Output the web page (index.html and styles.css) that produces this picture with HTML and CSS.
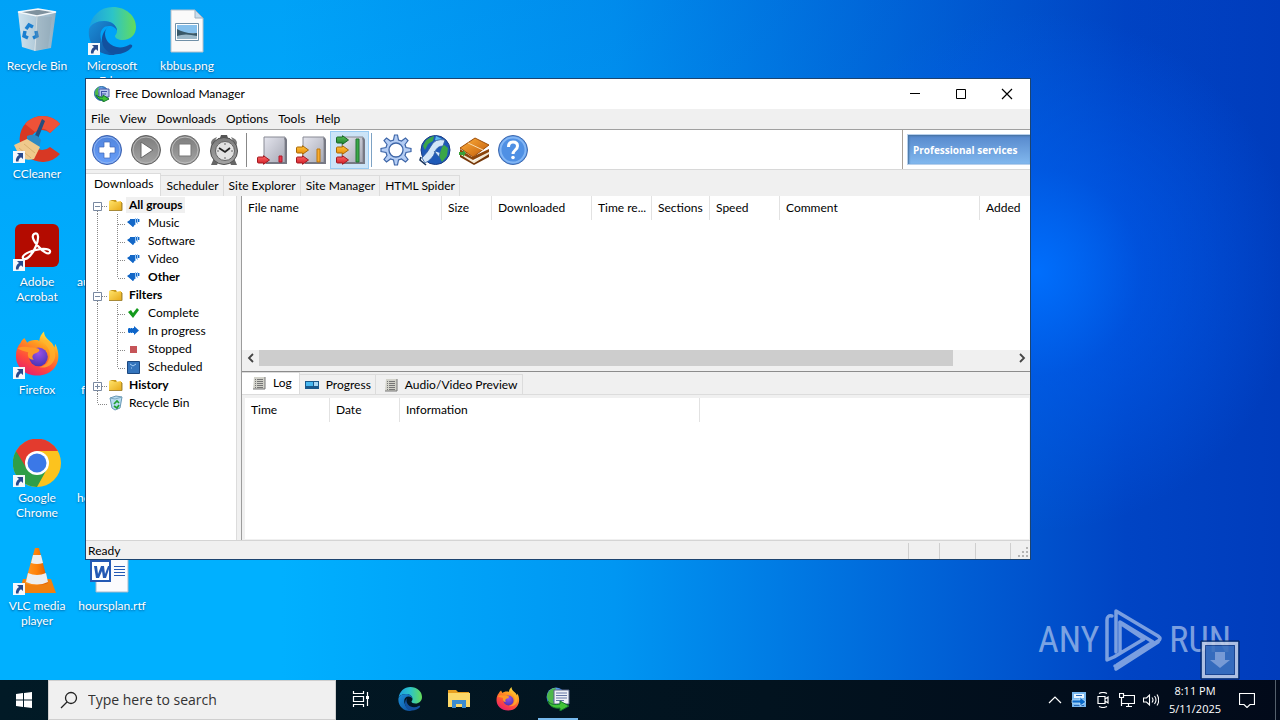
FILE: index.html
```html
<!DOCTYPE html>
<html lang="en">
<head>
<meta charset="utf-8">
<title>Free Download Manager</title>
<link rel="stylesheet" href="styles.css">
</head>
<body>
<svg class="sprite" width="0" height="0" aria-hidden="true">
  <defs>
    <linearGradient id="gBlue" x1="0" y1="0" x2="0" y2="1"><stop offset="0" stop-color="#4f83dc"/><stop offset="1" stop-color="#6aa0fa"/></linearGradient>
    <linearGradient id="gGray" x1="0" y1="0" x2="0" y2="1"><stop offset="0" stop-color="#7c7c7c"/><stop offset="1" stop-color="#a4a4a4"/></linearGradient>
    <linearGradient id="gBox" x1="0" y1="0" x2="1" y2="1"><stop offset="0" stop-color="#e4e5ee"/><stop offset="1" stop-color="#a6a8b4"/></linearGradient>
    <linearGradient id="gRed" x1="0" y1="0" x2="0" y2="1"><stop offset="0" stop-color="#ff6a6a"/><stop offset="1" stop-color="#d01c24"/></linearGradient>
    <linearGradient id="gOrange" x1="0" y1="0" x2="0" y2="1"><stop offset="0" stop-color="#ffc53a"/><stop offset="1" stop-color="#e88a08"/></linearGradient>
    <linearGradient id="gGreen" x1="0" y1="0" x2="0" y2="1"><stop offset="0" stop-color="#58c058"/><stop offset="1" stop-color="#1d8030"/></linearGradient>
    <linearGradient id="gFolder" x1="0" y1="0" x2="1" y2="1"><stop offset="0" stop-color="#ffe36a"/><stop offset="1" stop-color="#e8ac1c"/></linearGradient>
    <linearGradient id="gEdgeTop" x1="0" y1="0" x2="1" y2="0"><stop offset="0" stop-color="#1c9fe0"/><stop offset=".5" stop-color="#2cc4c8"/><stop offset="1" stop-color="#64dc5a"/></linearGradient>
    <linearGradient id="gEdgeLow" x1="0" y1="0" x2="1" y2="1"><stop offset="0" stop-color="#1b8fd8"/><stop offset="1" stop-color="#0f4f9e"/></linearGradient>
    <linearGradient id="gFox" x1=".8" y1="0" x2=".3" y2="1"><stop offset="0" stop-color="#fff04a"/><stop offset=".35" stop-color="#ff9a1f"/><stop offset=".7" stop-color="#ff4a3c"/><stop offset="1" stop-color="#e8206c"/></linearGradient>
    <radialGradient id="gFoxIn" cx=".5" cy=".3" r=".7"><stop offset="0" stop-color="#9b50e8"/><stop offset="1" stop-color="#4b35b4"/></radialGradient>
    <linearGradient id="gCone" x1="0" y1="0" x2="1" y2="0"><stop offset="0" stop-color="#ff9a28"/><stop offset=".5" stop-color="#ff8208"/><stop offset="1" stop-color="#d85c00"/></linearGradient>
    <linearGradient id="gBin" x1="0" y1="0" x2="1" y2="0"><stop offset="0" stop-color="#dfe8ee"/><stop offset="1" stop-color="#9fb0bc"/></linearGradient>
    <radialGradient id="gGlobe" cx=".4" cy=".3" r=".8"><stop offset="0" stop-color="#a0d0ff"/><stop offset=".6" stop-color="#2c78dc"/><stop offset="1" stop-color="#143c94"/></radialGradient>
    <linearGradient id="gBook" x1="0" y1="0" x2="1" y2="1"><stop offset="0" stop-color="#ffb03c"/><stop offset="1" stop-color="#c05a08"/></linearGradient>
  </defs>
  <symbol id="link" viewBox="0 0 12 12"><path d="M0 0h12v12H0z" fill="#f4f8fc"/><path d="M4 2h6v6L8 6.200C6.500 7 5.500 8.500 5.500 10.500H3C2.500 8 3.500 5.500 6 4z" fill="#284a8c"/></symbol>
  <symbol id="edge" viewBox="0 0 48 48">
    <path d="M1 22C3 9 12 0 25 0c13 0 23 9 23 20 0 8-6 13-13 13-5 0-8-2-8-4 0-1 2-2 2-5 0-6-6-10-13-10C8 14 2 18 1 22z" fill="url(#gEdgeTop)"/>
    <path d="M1 22c2-5 8-8 15-8 7 0 13 4 13 10-1-3-4-5-8-5-6 0-10 5-8 13 2 8 8 14 15 15-2 1-3 1-4 1C10 48-1 37 1 22z" fill="url(#gEdgeLow)"/>
    <path d="M20 20c-4 3-4 10 0 15 5 6 14 7 21 3 2-1 4 0 3 2-4 5-12 8-18 7C14 45 9 30 20 20z" fill="#12519f"/>
  </symbol>
  <symbol id="fox" viewBox="0 0 48 48">
    <path d="M6 12c1-3 3-4 4-5l3 5c2-2 5-3 8-3 2 0 4 0 5 1 0-4 2-7 5-10 0 6 4 8 8 12 1 1 2 3 3 5l1-4c5 10 4 20-1 26-5 6-11 8-18 8C11 47 1 38 1 26c0-6 2-11 5-14z" fill="url(#gFox)"/>
    <circle cx="25" cy="27" r="10" fill="url(#gFoxIn)"/>
    <path d="M3 18c5-3 11-1 14-1 5 0 9 1 9 3s-4 3-6 4c-2 2-2 4 0 6-5 0-7-3-6-8-4-1-8-2-11-4z" fill="#ff9826"/>
    <path d="M25 9c8 3 13 10 12 18-1 6-5 10-11 11 8 2 16-3 17-12 0-8-5-14-9-17z" fill="#ffb52c" opacity=".7"/>
  </symbol>
  <symbol id="bin" viewBox="0 0 48 48">
    <path d="M5 5l20-3 18 3-5 36-16 3-13-4z" fill="url(#gBin)" opacity=".92"/>
    <path d="M5 5l20-3 18 3-19 4z" fill="#7f929e"/><path d="M5 5l20-3 18 3-19 4z" fill="none" stroke="#f3f8fb" stroke-width="1.500"/>
    <path d="M24 9l-2 35" stroke="#edf5f8" stroke-width="1"/>
    <g fill="none" stroke="#1a7fd0" stroke-width="3.500"><path d="M13 22l3-4 4 2"/><path d="M23 24l1 5-4 2"/><path d="M15 31l-4-2 1-5"/></g>
    <path d="M23 9l16 1-4 31-13 3z" fill="#8c9aa4" opacity=".3"/>
  </symbol>
  <symbol id="folder" viewBox="0 0 16 16"><path d="M1 4l3-1h4l1 2h5v9H1z" fill="#c89818"/><path d="M1 4h4l2 1 6-1v9H1z" fill="url(#gFolder)"/><path d="M1 13.500h13V6" fill="none" stroke="#a88a38"/></symbol>
  <symbol id="drop" viewBox="0 0 16 16"><path d="M1 7l3-2V4h5v4l-2 4z" fill="#0b62c4"/><path d="M1 7l2 0 4 5 4-5 2 0V4H4v3z" fill="#1468c8"/><path d="M9.500 3v7M11.500 3v6M13.500 4v3" stroke="#9cc8f4"/></symbol>
  <symbol id="list" viewBox="0 0 14 14"><path d="M2 1h11v12H1z" fill="#d2d2ca"/><path d="M13 1v12H1" fill="none" stroke="#777"/><path d="M3 3.500h1m1 0h6M3 5.500h1m1 0h6M3 7.500h1m1 0h6M3 9.500h1m1 0h6M3 11.500h1m1 0h6" stroke="#767676"/></symbol>
  <symbol id="fdm" viewBox="0 0 24 24">
    <circle cx="10" cy="10" r="9.500" fill="url(#gGlobe)"/><path d="M1 9c1-5 4-8 9-8L8 6l2 3-3 4 3 5c-5 0-9-4-9-9z" fill="#4eb848"/>
    <path d="M8 3h15v14H8z" fill="#eef0f6" stroke="#5a6488"/><path d="M10 6h11M10 8.500h11M10 11h11M10 13.500h8" stroke="#6474a4"/>
    <path d="M2 14c3 4 7 4 12 3v-3l9 5-9 5v-3C8 22 3 19 2 14z" fill="#42c438" stroke="#14782c"/>
  </symbol>
  <symbol id="fdm-small" viewBox="0 0 16 16">
    <circle cx="7.500" cy="7.500" r="7" fill="url(#gGlobe)" stroke="#2a6a9c"/><path d="M1 7q0-4 4-6l-1 4 1 3-2 3q-2-1-2-4z" fill="#4eb848"/>
    <path d="M5 3h10v8H5z" fill="#b8c8f0" stroke="#4858a0"/><path d="M7 5.500h6M7 8h5M7.500 5v5" stroke="#4054a8"/>
    <path d="M2 9q3 3 7 2V9l6 4-6 3v-2Q4 14 2 9z" fill="#42c438" stroke="#14782c"/>
  </symbol>
  <symbol id="arrowR" viewBox="0 0 14 10"><path d="M1 3q0-1 1-1h5V.700L13 5 7 9.300V8H2Q1 8 1 7z"/></symbol>
</svg>

<div class="desktop">
  <div class="shortcuts">
    <div class="shortcut"><svg class="pic" viewBox="0 0 48 48"><use href="#bin"/></svg><span>Recycle Bin</span></div>
    <div class="shortcut"><svg class="pic" viewBox="0 0 48 48"><path d="M47 9A23 23 0 1 0 47 39L37 32a11 10 0 1 1 0-14z" fill="#d83824"/><path d="M47 9A23 23 0 0 0 12 9l10 8q8-7 15 1z" fill="#ee5238"/><path d="M29 4l3 2-8 20-4-1z" fill="#254d7c"/><path d="M14 21q9-4 14 4l-2 8-12-6z" fill="#2d8ac4"/><path d="M1 30l13-6 13 8-6 12q-12 3-16-6z" fill="#efc98c"/><path d="M6 33l12 10M11 29l11 9" stroke="#d8b070"/><use href="#link" y="36" width="12" height="12"/></svg><span>CCleaner</span></div>
    <div class="shortcut"><svg class="pic" viewBox="0 0 48 48"><rect x="2" y="1" width="44" height="43" rx="6" fill="#b30b00"/><path d="M21 11c5-3 5 5 2 12-3 8-9 14-12 13-4-2 2-7 12-9 8-2 15-1 14 2-1 4-8-1-12-6-4-4-7-10-4-12z" fill="none" stroke="#fff" stroke-width="2.200"/><use href="#link" y="36" width="12" height="12"/></svg><span>Adobe Acrobat</span></div>
    <div class="shortcut"><svg class="pic" viewBox="0 0 48 48"><use href="#fox" x="2" y="0" width="45" height="46"/><use href="#link" y="36" width="12" height="12"/></svg><span>Firefox</span></div>
    <div class="shortcut"><svg class="pic" viewBox="0 0 48 48"><circle cx="24" cy="24" r="24" fill="#fcc31e"/><path d="M24 24L3 12A24 24 0 0 0 24 48L34 30z" fill="#2f9e48"/><path d="M3 12A24 24 0 0 1 45 12H24L14 30z" fill="#e33b2e"/><circle cx="24" cy="24" r="12" fill="#fff"/><circle cx="24" cy="24" r="9.500" fill="#3b78e7"/><use href="#link" y="36" width="12" height="12"/></svg><span>Google Chrome</span></div>
    <div class="shortcut"><svg class="pic" viewBox="0 0 48 48"><path d="M10 32h28l5 14H6z" fill="#f08010"/><path d="M22 1h4l9 35q-11 5-23 0z" fill="url(#gCone)"/><path d="M20 8h8l2 8q-6 2-12 0zM15 26q9 4 18 0l2 9q-11 5-22 0z" fill="#eceef0"/><use href="#link" y="36" width="12" height="12"/></svg><span>VLC media player</span></div>
    <div class="shortcut"><svg class="pic" viewBox="0 0 48 48"><use href="#edge"/><use href="#link" y="36" width="12" height="12"/></svg><span>Microsoft Edge</span></div>
    <div class="shortcut"></div>
    <div class="shortcut partial"><span>au</span></div>
    <div class="shortcut partial"><span class="inset">fo</span></div>
    <div class="shortcut partial"><span>ho</span></div>
    <div class="shortcut"><svg class="pic" viewBox="0 0 48 48"><path d="M8 3h32v42H8z" fill="#fbfbfd" stroke="#a8b8c8"/><path d="M3 14h19v20H3z" fill="#fff" stroke="#2459b4" stroke-width="2"/><path d="M6 19h3l1 8 3-8h3l1 8 3-8h2l-4 12h-3l-1-7-3 7H8z" fill="#2459b4"/><path d="M26 19.500h11M26 22.500h11M26 25.500h11M26 28.500h11" stroke="#2459b4"/></svg><span>hoursplan.rtf</span></div>
    <div class="shortcut"><svg class="pic" viewBox="0 0 48 48"><path d="M8 3h24l8 8v34H8z" fill="#fafafa" stroke="#b8c0c8"/><path d="M32 3v8h8z" fill="#c8dcec" stroke="#9cb0c0"/><path d="M12.500 16.500h23v17h-23z" fill="#fff" stroke="#7090a8"/><path d="M14 18h20v8H14z" fill="#86c0ec"/><path d="M14 22q8 5 20 4v6H14z" fill="#385868"/><path d="M14 29q8-3 20 0v3H14z" fill="#9cb8c8"/></svg><span>kbbus.png</span></div>
  </div>

  <div class="watermark" aria-hidden="true">
    <span>ANY</span>
    <svg viewBox="0 0 58 64" width="58" height="64"><g fill="none" stroke="currentColor" stroke-width="3.500" stroke-linejoin="round" stroke-linecap="round"><path d="M11 44V3l42 25q4 3 0 5L14 58q-2 2-4 0"/><path d="M15 14l33 20-36 23"/><path d="M7 8q-5-1-5 4v40l7-3 30-18L15 15v30"/><path d="M11 61l42-27"/></g></svg>
    <span>RUN</span>
  </div>
  <svg class="drop-badge" viewBox="0 0 40 40" aria-hidden="true"><path d="M1 1h38v38H1z" fill="#3b70bd" stroke="#0b1c44"/><path d="M3.500 3.500h33v33h-33z" fill="none" stroke="#c0cde6" stroke-width="3"/><path d="M5.500 5.500h29v29h-29z" fill="none" stroke="#1f468c"/><path d="M15 12h10v8h5L20 28l-10-8h5z" fill="#84a4d8"/></svg>

  <main class="window">
    <header class="titlebar">
      <svg class="i16"><use href="#fdm-small"/></svg>
      <h1>Free Download Manager</h1>
      <button class="cap" aria-label="Minimize"><svg viewBox="0 0 12 12"><path d="M1 5.500h10" stroke="#000"/></svg></button>
      <button class="cap" aria-label="Maximize"><svg viewBox="0 0 12 12"><path d="M1.500 1.500h9v9h-9z" fill="none" stroke="#000"/></svg></button>
      <button class="cap" aria-label="Close"><svg viewBox="0 0 12 12"><path d="M1 1l10 10M11 1L1 11" stroke="#000" stroke-width="1.200"/></svg></button>
    </header>
    <nav class="menubar"><button>File</button><button>View</button><button>Downloads</button><button>Options</button><button>Tools</button><button>Help</button></nav>
    <div class="toolbar">
      <button class="tool" aria-label="Add download"><svg viewBox="0 0 32 32"><circle cx="16" cy="16" r="14.500" fill="url(#gBlue)" stroke="#3f62ac"/><circle cx="16" cy="16" r="13" fill="none" stroke="#8fb4f0"/><path d="M13 8h6v5h5v6h-5v5h-6v-5H8v-6h5z" fill="#fff" stroke="#3f68b8" stroke-width=".700"/></svg></button>
      <button class="tool" aria-label="Start"><svg viewBox="0 0 32 32"><circle cx="16" cy="16" r="14.500" fill="url(#gGray)" stroke="#606060"/><circle cx="16" cy="16" r="13" fill="none" stroke="#b4b4b4"/><path d="M11 8l12 8-12 8z" fill="#fff" stroke="#666"/></svg></button>
      <button class="tool" aria-label="Stop"><svg viewBox="0 0 32 32"><circle cx="16" cy="16" r="14.500" fill="url(#gGray)" stroke="#707070"/><circle cx="16" cy="16" r="13" fill="none" stroke="#bcbcbc"/><path d="M10 10h12v12H10z" fill="#fff" stroke="#777"/></svg></button>
      <button class="tool" aria-label="Schedule"><svg viewBox="0 0 32 32"><path d="M6 24l-3 7h6l2-4zM26 24l3 7h-6l-2-4z" fill="#666"/><path d="M13 1h6l1 3h2v5H10V4h2z" fill="#555"/><path d="M3 9q0-4 6-6L4 13zM29 9q0-4-6-6l5 10z" fill="#777"/><circle cx="16" cy="17" r="13.500" fill="url(#gGray)" stroke="#505050"/><circle cx="17" cy="17" r="9.500" fill="#e2e2e2" stroke="#666"/><path d="M11 14l6 4 5-4" fill="none" stroke="#222" stroke-width="1.800"/><path d="M17 9v2M17 23v2M9 17h2M23 17h2" stroke="#666"/></svg></button>
      <i class="sep"></i>
      <button class="tool" aria-label="Light traffic"><svg viewBox="0 0 32 32"><path d="M8 3h21v26H8z" fill="url(#gBox)" stroke="#888a94"/><path d="M29 4l1 2v23H10" fill="none" stroke="#777984" stroke-width="2"/><path d="M23 22h3v6h-3z" fill="#e8384c" stroke="#b01828"/><use href="#arrowR" x="0" y="21" width="15" height="10" fill="url(#gRed)" stroke="#a01820"/></svg></button>
      <button class="tool" aria-label="Medium traffic"><svg viewBox="0 0 32 32"><path d="M8 3h21v26H8z" fill="url(#gBox)" stroke="#888a94"/><path d="M29 4l1 2v23H10" fill="none" stroke="#777984" stroke-width="2"/><path d="M22 15h3v13h-3z" fill="#f8ac30" stroke="#bc7408"/><use href="#arrowR" x="0" y="11" width="15" height="10" fill="url(#gOrange)" stroke="#a86808"/><use href="#arrowR" x="0" y="21" width="15" height="10" fill="url(#gRed)" stroke="#a01820"/></svg></button>
      <button class="tool on" aria-label="Heavy traffic" aria-pressed="true"><svg viewBox="0 0 32 32"><path d="M8 3h21v26H8z" fill="url(#gBox)" stroke="#888a94"/><path d="M29 4l1 2v23H10" fill="none" stroke="#777984" stroke-width="2"/><path d="M22 5h3v23h-3z" fill="#3ca848" stroke="#207430"/><use href="#arrowR" x="1" y="1" width="15" height="10" fill="url(#gGreen)" stroke="#186828"/><use href="#arrowR" x="1" y="11" width="15" height="10" fill="url(#gOrange)" stroke="#a86808"/><use href="#arrowR" x="1" y="21" width="15" height="10" fill="url(#gRed)" stroke="#a01820"/></svg></button>
      <i class="sep tight"></i>
      <button class="tool" aria-label="Settings"><svg viewBox="0 0 32 32"><path d="M14.500 1h3l1 5 3 1 4-3 2.500 2.500-3 4 1 3 5 1v3l-5 1-1 3 3 4-2.500 2.500-4-3-3 1-1 5h-3l-1-5-3-1-4 3L4 25.500l3-4-1-3-5-1v-3l5-1 1-3-3-4L6.500 4l4 3 3-1z" fill="#b4cdf4" stroke="#3e66a8" stroke-width="1.200"/><circle cx="16" cy="16" r="7" fill="#fff" stroke="#3e66a8" stroke-width="1.300"/></svg></button>
      <button class="tool" aria-label="Network"><svg viewBox="0 0 32 32"><circle cx="16.500" cy="16" r="14.500" fill="#1f5ab8" stroke="#183c84"/><path d="M4 12q3-8 11-10l-1 5-5 3-3 6zM24 10l5 4-1 8-5 6-3-6z" fill="#3ba648"/><path d="M17 2l8 4-3 3-6-3z" fill="#5cb8f0"/><path d="M26 6q-10-2-14 6-3 6-9 12l3 5q8-4 10-11 2-6 8-6zM15 17l5 6 1-4" fill="#d4e6f8" stroke="#2858a0" stroke-width=".800"/><path d="M2 23l-1 3 6 5" fill="none" stroke="#18345c" stroke-width="1.600"/></svg></button>
      <button class="tool" aria-label="Help contents"><svg viewBox="0 0 32 32"><path d="M2 19l13 9 16-9v4L16 31 2 23z" fill="#753708"/><path d="M3 20l13 8 15-9" fill="none" stroke="#f5e8d0" stroke-width="2"/><path d="M2 15l12 8 17-8v3l-16 8L2 19z" fill="#8c450a"/><path d="M2 14L17 4l14 7-16 12z" fill="url(#gBook)" stroke="#9c4c08"/><path d="M10 9l15 7" stroke="#f8dcb0"/><path d="M1 18h4v-2l3 3-3 4v-2H1z" fill="#39a038"/></svg></button>
      <button class="tool" aria-label="About"><svg viewBox="0 0 32 32"><circle cx="16" cy="16" r="14.500" fill="#4f90e4" stroke="#3f68ac"/><circle cx="16" cy="16" r="12.500" fill="none" stroke="#83b6f4" stroke-width="2"/><path d="M11.500 13q0-5 4.500-5t4.500 4c0 4-4.500 4-4.500 8" fill="none" stroke="#fff" stroke-width="3"/><circle cx="16" cy="23.500" r="1.800" fill="#fff"/></svg></button>
      <div class="promo"><a href="#services">Professional services</a></div>
    </div>
    <div class="tabs main-tabs" role="tablist">
      <button role="tab" aria-selected="true">Downloads</button><button role="tab">Scheduler</button><button role="tab">Site Explorer</button><button role="tab">Site Manager</button><button role="tab">HTML Spider</button>
    </div>
    <div class="body">
      <ul class="tree">
        <li><svg class="twig" viewBox="0 0 22 18"><path class="dots" d="M11.500 15v3M16 10.500h6"/><path class="box" d="M7.500 6.500h8v8h-8zM9 10.500h5"/></svg><svg class="i16"><use href="#folder"/></svg><b class="sel">All groups</b></li>
        <li><svg class="twig deep" viewBox="0 0 40 18"><path class="dots" d="M11.500 0v18M31.500 0v18M32 10.500h8"/></svg><svg class="i16"><use href="#drop"/></svg><span>Music</span></li>
        <li><svg class="twig deep" viewBox="0 0 40 18"><path class="dots" d="M11.500 0v18M31.500 0v18M32 10.500h8"/></svg><svg class="i16"><use href="#drop"/></svg><span>Software</span></li>
        <li><svg class="twig deep" viewBox="0 0 40 18"><path class="dots" d="M11.500 0v18M31.500 0v18M32 10.500h8"/></svg><svg class="i16"><use href="#drop"/></svg><span>Video</span></li>
        <li><svg class="twig deep" viewBox="0 0 40 18"><path class="dots" d="M11.500 0v18M31.500 0v10M32 10.500h8"/></svg><svg class="i16"><use href="#drop"/></svg><b>Other</b></li>
        <li><svg class="twig" viewBox="0 0 22 18"><path class="dots" d="M11.500 0v6M11.500 15v3M16 10.500h6"/><path class="box" d="M7.500 6.500h8v8h-8zM9 10.500h5"/></svg><svg class="i16"><use href="#folder"/></svg><b>Filters</b></li>
        <li><svg class="twig deep" viewBox="0 0 40 18"><path class="dots" d="M11.500 0v18M31.500 0v18M32 10.500h8"/></svg><svg class="i16" viewBox="0 0 16 16"><path d="M2 7l3-2 2 3 4-5 2 2-6 8z" fill="#149a1c"/></svg><span>Complete</span></li>
        <li><svg class="twig deep" viewBox="0 0 40 18"><path class="dots" d="M11.500 0v18M31.500 0v18M32 10.500h8"/></svg><svg class="i16" viewBox="0 0 16 16"><path d="M6 5h2V3l5 4.500L8 12v-2H2V5z" fill="#0e64c8"/><path d="M2 5.500h5M2 9.500h5" stroke="#5ca4ec" stroke-dasharray="1 1"/></svg><span>In progress</span></li>
        <li><svg class="twig deep" viewBox="0 0 40 18"><path class="dots" d="M11.500 0v18M31.500 0v18M32 10.500h8"/></svg><svg class="i16" viewBox="0 0 16 16"><path d="M4 5h7v7H4z" fill="#c65458"/></svg><span>Stopped</span></li>
        <li><svg class="twig deep" viewBox="0 0 40 18"><path class="dots" d="M11.500 0v18M31.500 0v10M32 10.500h8"/></svg><svg class="i16" viewBox="0 0 16 16"><path d="M1.500 2.500h12v12h-12z" fill="#3474bc" stroke="#1c4880"/><path d="M4 5l3 2 3-2M5 9h1" fill="none" stroke="#a4d0f8"/></svg><span>Scheduled</span></li>
        <li><svg class="twig" viewBox="0 0 22 18"><path class="dots" d="M11.500 0v6M11.500 15v3M16 10.500h6"/><path class="box" d="M7.500 6.500h8v8h-8zM9 10.500h5M11.500 8v5"/></svg><svg class="i16"><use href="#folder"/></svg><b>History</b></li>
        <li><svg class="twig" viewBox="0 0 22 18"><path class="dots" d="M11.500 0v10M12 10.500h10"/></svg><svg class="i16" viewBox="0 0 16 16"><path d="M2 3l6-2 6 1-2 11-5 2-3-2z" fill="#b8dcf0" stroke="#6898b4"/><path d="M2 3l5 1 7-2" fill="none" stroke="#7ca8c0"/><path d="M6 9l3-3 2 2M11 10l-2 3-3-2" fill="none" stroke="#20a030" stroke-width="1.700"/></svg><span>Recycle Bin</span></li>
      </ul>
      <div class="panes">
        <section class="files">
          <table>
            <colgroup><col class="w200"><col class="w50"><col class="w100"><col class="w60"><col class="w58"><col class="w70"><col class="w200"><col></colgroup>
            <thead><tr><th>File name</th><th>Size</th><th>Downloaded</th><th>Time re...</th><th>Sections</th><th>Speed</th><th>Comment</th><th>Added</th></tr></thead>
          </table>
          <div class="scroll">
            <button aria-label="Scroll left"><svg viewBox="0 0 8 10"><path d="M6 1L2 5l4 4" fill="none" stroke="#444" stroke-width="1.800"/></svg></button>
            <div class="track"><div class="thumb"></div></div>
            <button aria-label="Scroll right"><svg viewBox="0 0 8 10"><path d="M2 1l4 4-4 4" fill="none" stroke="#444" stroke-width="1.800"/></svg></button>
          </div>
        </section>
        <section class="details">
          <div class="tabs sub-tabs" role="tablist">
            <button role="tab" aria-selected="true"><svg class="i14"><use href="#list"/></svg>Log</button><button role="tab"><svg class="i14" viewBox="0 0 14 14"><path d="M0 3h14v8H0z" fill="#18588c"/><path d="M1 4h7v4H1z" fill="#48b8f0"/><path d="M9 4h4v4H9z" fill="#a8d8f4"/></svg>Progress</button><button role="tab"><svg class="i14"><use href="#list"/></svg>Audio/Video Preview</button>
          </div>
          <div class="log">
            <table>
              <colgroup><col class="w85"><col class="w70"><col class="w300"><col></colgroup>
              <thead><tr><th>Time</th><th>Date</th><th>Information</th><td></td></tr></thead>
            </table>
          </div>
        </section>
      </div>
    </div>
    <footer class="status"><span>Ready</span><i class="c31"></i><i class="c36"></i><i class="c35"></i><i class="c20"><svg viewBox="0 0 10 10"><path d="M8 0h2v2H8zM4 4h2v2H4zM8 4h2v2H8zM0 8h2v2H0zM4 8h2v2H4zM8 8h2v2H8z" fill="#b4b4b4"/></svg></i></footer>
  </main>
</div>

<div class="taskbar">
  <button class="start" aria-label="Start"><svg viewBox="0 0 16 16"><path d="M0 2l7-1v6.500H0zM8 1l8-1v7.500H8zM0 8.500h7V15l-7-1zM8 8.500h8V16l-8-1z" fill="#fff"/></svg></button>
  <label class="search"><svg viewBox="0 0 18 18"><circle cx="11" cy="7" r="5.500" fill="none" stroke="#222" stroke-width="1.300"/><path d="M7 11l-6 6" stroke="#222" stroke-width="1.300"/></svg><input type="text" placeholder="Type here to search" aria-label="Type here to search"></label>
  <button class="app" aria-label="Task view"><svg viewBox="0 0 18 18"><path d="M1.500 1v2.500h10V1M1.500 17v-2.500h10V17M1.500 6.500h10v5h-10zM15.500 2v14" fill="none" stroke="#fff" stroke-width="1.200"/><path d="M14 6h3v3h-3z" fill="#fff"/></svg></button>
  <button class="app" aria-label="Microsoft Edge"><svg class="i24" viewBox="0 0 48 48"><use href="#edge"/></svg></button>
  <button class="app" aria-label="File Explorer"><svg class="i24" viewBox="0 0 24 24"><path d="M1 3h8l2 2h11v6H1z" fill="#e8a020"/><path d="M1 6h22v14H1z" fill="#fcd868"/><path d="M5 13h14v8h-4v-4H9v4H5z" fill="#3c8cd0"/></svg></button>
  <button class="app" aria-label="Firefox"><svg class="i24" viewBox="0 0 48 48"><use href="#fox"/></svg></button>
  <button class="app active" aria-label="Free Download Manager"><svg class="i24" viewBox="0 0 24 24"><use href="#fdm"/></svg></button>
  <div class="tray">
    <button aria-label="Hidden icons"><svg viewBox="0 0 16 16"><path d="M2 11l6-6 6 6" fill="none" stroke="#fff" stroke-width="1.200"/></svg></button>
    <button aria-label="Downloads"><svg viewBox="0 0 16 16"><path d="M1 0h14v15H1z" fill="#78b8f0"/><path d="M3 2h10v4H3z" fill="#eaf6ff"/><path d="M5 3.500h6M3 13.500h10" stroke="#2868b8"/><path d="M1 8h8V5l6 5-6 4v-3H1z" fill="#0868c8" stroke="#d0ecff" stroke-width=".700"/></svg></button>
    <button aria-label="Meet now"><svg viewBox="0 0 16 16"><path d="M4 1.500q4-2 8 0M4 14.500q4 2 8 0M3 4.500h7v7H3zM10 7l3-2v6l-3-2" fill="none" stroke="#fff" stroke-width="1.200"/></svg></button>
    <button aria-label="Network"><svg viewBox="0 0 16 16"><path d="M4 3.500h11.500v8H3M7 14.500h6M9.500 12v3M.500 1.500h4v4h-4zM2.500 6v8" fill="none" stroke="#fff" stroke-width="1.200"/></svg></button>
    <button aria-label="Volume"><svg viewBox="0 0 16 16"><path d="M.500 6h3l3-3v10l-3-3h-3zM9 5.500q2 2.500 0 5M11.500 4q3 4 0 8M14 2.500q3.500 5.500 0 11" fill="none" stroke="#fff" stroke-width="1.100"/></svg></button>
    <div class="clock"><span>8:11 PM</span><span>5/11/2025</span></div>
    <button class="notes" aria-label="Notifications"><svg viewBox="0 0 16 16"><path d="M.500 1.500h15v11H11l-3 3-3-3H.500z" fill="none" stroke="#fff" stroke-width="1.200"/></svg></button>
    <i class="peek"></i>
  </div>
</div>
</body>
</html>
```
FILE: styles.css
```css
* { box-sizing: border-box; }
body {
  margin: 0;
  min-height: 100vh;
  display: flex;
  flex-direction: column;
  overflow: hidden;
  font: 12px/16px Lato, "Open Sans", sans-serif;
  color: #000;
}
button { font: inherit; color: inherit; background: none; border: 0; padding: 0; margin: 0; }
svg { display: block; flex: none; }
.sprite { position: absolute; }
.i14 { width: 14px; height: 14px; }
.i16 { width: 16px; height: 16px; }
.i24 { width: 24px; height: 24px; }

/* Desktop */
.desktop {
  flex: 1;
  position: relative;
  background:
    radial-gradient(circle 260px at 81% 40%, rgba(0, 112, 255, .95), rgba(0, 96, 245, .5) 40%, rgba(0, 80, 230, 0)),
    linear-gradient(to bottom, rgba(0, 60, 190, .12), rgba(0, 60, 190, 0) 60%),
    linear-gradient(to right, #00b0ff 0%, #00b0ff 22%, #0096f2 48%, #0064d8 72%, #0044c4 88%, #003cbc 100%);
}
.shortcuts {
  display: grid;
  grid-auto-flow: column;
  grid-template-rows: repeat(6, 108px);
  grid-auto-columns: 75px;
  color: #fff;
}
.shortcut {
  display: flex;
  flex-direction: column;
  align-items: center;
  gap: 3px;
  padding: 7px 1px 0 0;
  text-align: center;
  line-height: 15px;
  text-shadow: 0 1px 2px rgba(0, 40, 90, .6);
}
.shortcut .pic { width: 48px; height: 48px; }
.partial { align-items: flex-start; padding: 58px 0 0 2px; }
.inset { padding-left: 4px; }

.watermark {
  position: absolute;
  right: 49px;
  bottom: 8px;
  display: flex;
  align-items: center;
  gap: 6px;
  color: #bcd0f0;
  opacity: .65;
  font: 400 36px/64px "Roboto Condensed", "Liberation Sans Narrow", Roboto, sans-serif;
}
.drop-badge { position: absolute; right: 40px; bottom: 0; width: 40px; height: 40px; opacity: .9; }

/* Window */
.window {
  position: absolute;
  left: 85px;
  top: 78px;
  right: 249px;
  bottom: 120px;
  display: flex;
  flex-direction: column;
  border: 1px solid #1c4470;
  background: #f0f0f0;
  overflow: hidden;
}
.titlebar { display: flex; align-items: center; height: 30px; background: #fff; padding-left: 8px; flex: none; }
.titlebar h1 { flex: 1; margin: 0 0 0 5px; font-size: 12px; font-weight: 400; }
.cap { width: 46px; height: 28px; display: flex; align-items: center; justify-content: center; }
.cap svg { width: 12px; height: 12px; }
.menubar { display: flex; height: 21px; padding-left: 5px; gap: 10px; border-bottom: 1px solid #a0a0a0; flex: none; }
.toolbar { display: flex; align-items: center; height: 40px; padding-left: 1px; background: #fff; border-bottom: 1px solid #d8d8d8; flex: none; }
.tool { width: 39px; height: 38px; display: flex; align-items: center; justify-content: center; flex: none; border: 1px solid transparent; }
.tool svg { width: 32px; height: 32px; }
.tool.on { background: #cce4f7; border-color: #99cbf2; }
.sep { width: 1px; height: 34px; background: #888; margin: 0 5px 0 3px; }
.sep.tight { background: #7da2c4; margin: 0 4px 0 2px; }
.promo { margin-left: auto; width: 128px; align-self: stretch; padding: 4px 0 4px 4px; border-left: 1px solid #a8a098; }
.promo a {
  display: block;
  height: 31px;
  line-height: 30px;
  padding-left: 5px;
  background: linear-gradient(#5688cc, #82b8ee);
  border: 1px solid #b8d0ec;
  border-right: 0;
  box-shadow: inset 1px 1px 2px #44709c;
  color: #fff;
  font-family: "Open Sans", sans-serif;
  font-size: 10px;
  font-weight: 700;
  text-decoration: none;
  white-space: nowrap;
}
.tabs { display: flex; align-items: flex-end; }
.tabs button {
  display: flex;
  align-items: center;
  border: 1px solid #dcdcdc;
  border-left: 0;
  border-bottom: 0;
  white-space: nowrap;
}
.tabs [aria-selected] { background: #fff; }
.main-tabs { height: 26px; flex: none; }
.main-tabs button { height: 21px; padding: 0 4px 0 5px; }
.main-tabs [aria-selected] { height: 23px; padding: 0 7px 3px 8px; }
.body { flex: 1; display: flex; min-height: 0; }

.tree { width: 151px; margin: 0; padding: 0; list-style: none; background: #fff; border-right: 1px solid #dcdcdc; flex: none; }
.tree li { display: flex; align-items: center; height: 18px; white-space: nowrap; }
.tree b { padding-left: 5px; font-size: 12px; }
.tree span { padding-left: 5px; }
.tree .deep ~ span, .tree .deep ~ b { padding-left: 6px; }
.tree .sel { background: linear-gradient(#f0f0f0, #f0f0f0) 2px 0 no-repeat; padding-right: 2px; }
.twig { width: 22px; height: 18px; }
.twig.deep { width: 40px; }
.dots { fill: none; stroke: #888; stroke-dasharray: 1 1; }
.box { fill: #fff; stroke: #7888a0; }

.panes { flex: 1; min-width: 0; display: flex; flex-direction: column; margin-left: 4px; border-left: 1px solid #9c9c9c; }
.files { flex: 171; display: flex; flex-direction: column; background: #fff; }
table { width: 100%; table-layout: fixed; border-collapse: separate; border-spacing: 0; background: #fff; }
th, td { height: 24px; padding: 0 0 0 6px; border-right: 1px solid #e2e2e2; font-weight: 400; text-align: left; white-space: nowrap; overflow: hidden; }
th:last-child, td:last-child { border-right: 0; }
.w50 { width: 50px; } .w58 { width: 58px; } .w60 { width: 60px; } .w70 { width: 70px; }
.w85 { width: 85px; } .w100 { width: 100px; } .w200 { width: 200px; } .w300 { width: 300px; }
.scroll { margin-top: auto; display: flex; height: 16px; background: #f0f0f0; }
.scroll button { width: 17px; display: flex; align-items: center; justify-content: center; }
.scroll svg { width: 8px; height: 10px; }
.track { flex: 1; }
.thumb { width: 92%; height: 100%; background: #cdcdcd; }
.details { flex: 169; display: flex; flex-direction: column; margin-top: 5px; border-top: 1px solid #8c8c8c; }
.sub-tabs { height: 23px; border-bottom: 1px solid #dcdcdc; flex: none; }
.sub-tabs button { height: 20px; gap: 7px; padding: 0 4px 0 5px; }
.sub-tabs button:last-child { padding-left: 8px; }
.sub-tabs [aria-selected] { height: 22px; padding: 0 7px 2px 10px; }
.log { flex: 1; margin: 3px 1px 1px 3px; background: #fff; }

.status { display: flex; height: 19px; flex: none; border-top: 1px solid #d4d4d4; line-height: 19px; }
.status span { flex: 1; padding-left: 2px; }
.status i { border-left: 1px solid #cfcfcf; margin-top: 2px; }
.c31 { width: 31px; } .c36 { width: 36px; } .c35 { width: 35px; }
.c20 { width: 20px; display: flex; align-items: flex-end; justify-content: flex-end; padding: 0 2px 2px 0; }
.c20 svg { width: 10px; height: 10px; }

/* Taskbar */
.taskbar { display: flex; height: 40px; flex: none; background: linear-gradient(to right, #011a26, #02131f 60%, #020a1a); color: #fff; }
.taskbar button { display: flex; align-items: center; justify-content: center; }
.start { width: 48px; }
.start svg { width: 16px; height: 16px; }
.search { width: 288px; display: flex; align-items: center; padding-left: 11px; gap: 10px; background: #f0f0f0; border: 1px solid #cfcfcf; }
.search svg { width: 18px; height: 18px; }
.search input { flex: 1; min-width: 0; border: 0; padding: 0; background: none; font: 14px/20px "Open Sans", sans-serif; outline: 0; }
.search input::placeholder { color: #333; opacity: 1; }
.app { width: 49px; border-bottom: 2px solid transparent; }
.app svg { width: 18px; height: 18px; }
.app .i24 { width: 24px; height: 24px; }
.active { width: 40px; margin-left: 6px; border-color: #76b9ed; }
.tray { margin-left: auto; display: flex; }
.tray button { width: 24px; }
.tray svg { width: 16px; height: 16px; }
.clock { width: 64px; display: flex; flex-direction: column; align-items: center; padding-top: 2px; line-height: 18px; font: 11px/18px "Open Sans", sans-serif; }
.tray .notes { width: 40px; }
.peek { width: 5px; margin-left: 8px; border-left: 1px solid #55606c; }
```
